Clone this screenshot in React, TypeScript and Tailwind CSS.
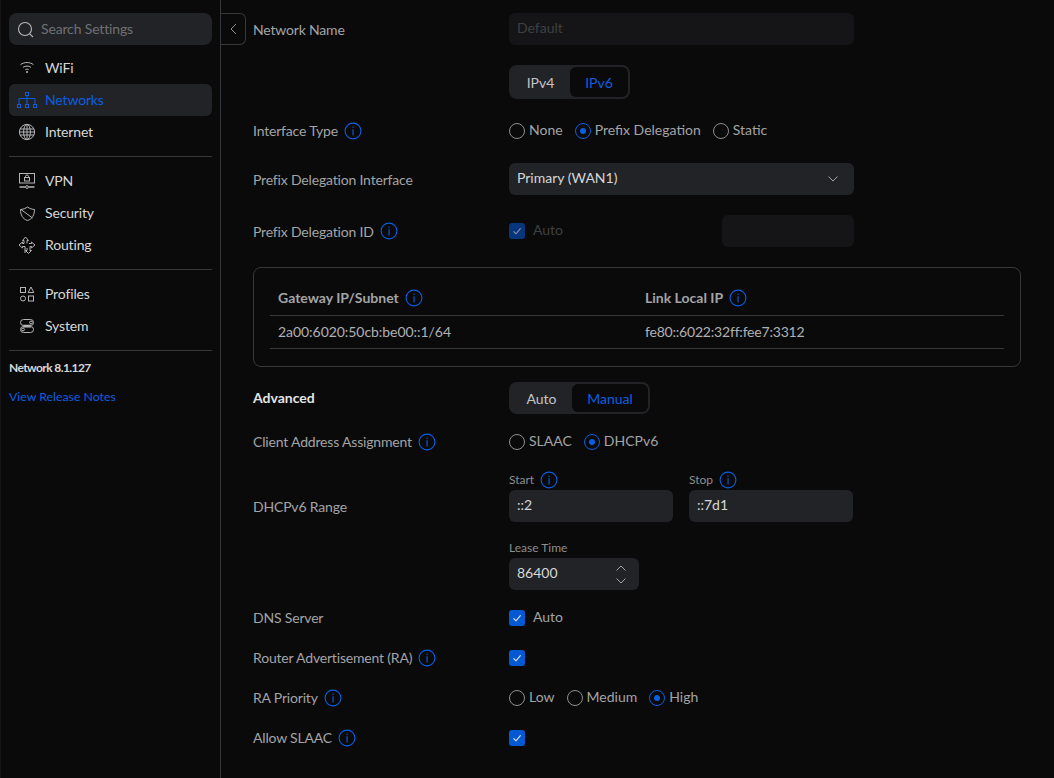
import React from "react";

const BLUE = "text-[#0a5fe0]";

function Info() {
  return (
    <svg width="18" height="18" viewBox="0 0 18 18" fill="none" className="text-[#0a5fe0] shrink-0">
      <circle cx="9" cy="9" r="7.9" stroke="currentColor" strokeWidth="1.1" />
      <rect x="8.5" y="4.6" width="1.1" height="1.3" fill="currentColor" />
      <rect x="8.5" y="7.2" width="1.1" height="6.2" fill="currentColor" />
    </svg>
  );
}

function Radio({ on, label }: { on?: boolean; label: string }) {
  return (
    <div className="flex items-center gap-[4px]">
      <span
        className={`w-4 h-4 rounded-full border flex items-center justify-center ${
          on ? "border-[#0a5fe0]" : "border-[#8d8e90]"
        }`}
      >
        {on && <span className="w-[6px] h-[6px] rounded-full bg-[#0a5fe0]" />}
      </span>
      <span className="text-[14px] text-[#a3a4a6] -mt-[4px]">{label}</span>
    </div>
  );
}

function Check({ dim }: { dim?: boolean }) {
  return (
    <span className={`w-4 h-4 rounded-[3px] flex items-center justify-center ${dim ? "bg-[#07367c]" : "bg-[#0559d4]"}`}>
      <svg width="10" height="10" viewBox="0 0 10 10" fill="none">
        <path d="M1.5 5.4 4 7.8 8.6 2.4" stroke={dim ? "#8b98ad" : "#e8eefa"} strokeWidth="1.1" />
      </svg>
    </span>
  );
}

function Seg({ a, b, h, w, active }: { a: string; b: string; h: string; w: string; active: string }) {
  return (
    <div className={`flex items-center rounded-lg bg-[#222326] pr-[2px] ${h} ${w}`}>
      <div className="flex-1 pl-[2px] flex items-center justify-center text-[14px] text-[#c3c4c6]">{a}</div>
      <div className={`h-[calc(100%-4px)] rounded-md bg-[#0a0a0b] flex items-center justify-center text-[14px] ${active} ${BLUE}`}>
        {b}
      </div>
    </div>
  );
}

function Row({ label, info, h, mt, bold, up, children }: { label: string; info?: boolean; h: string; mt: string; bold?: boolean; up?: boolean; children?: React.ReactNode }) {
  return (
    <div className={`flex items-center ${h} ${mt}`}>
      <div className={`w-[256px] flex items-center gap-[6px] text-[14px] ${bold ? "font-bold text-[#e4e4e5]" : "text-[#a3a4a6] tracking-[-0.18px]"}`}>
        <span className={up ? "-mt-[2px]" : ""}>{label}</span>
        {info && <Info />}
      </div>
      {children}
    </div>
  );
}

const stroke = { fill: "none", stroke: "currentColor", strokeWidth: 1 };

const icons: Record<string, React.ReactNode> = {
  wifi: (
    <g {...stroke}>
      <path d="M3.500 6.700c3.600-2.900 9.400-2.900 13 0" />
      <path d="M6 9.400c2.300-1.800 5.700-1.800 8 0" />
      <path d="M8.300 11.700c1-.7 2.400-.7 3.400 0" />
      <circle cx="10" cy="14" r="0.700" />
    </g>
  ),
  networks: (
    <g {...stroke}>
      <rect x="8.500" y="2.500" width="3" height="3" />
      <path d="M10 5.500v9M2 14.500V8.500h16v6" />
      <rect x="0.500" y="14.500" width="3" height="3" />
      <rect x="8.500" y="14.500" width="3" height="3" />
      <rect x="16.500" y="14.500" width="3" height="3" />
    </g>
  ),
  globe: (
    <g {...stroke}>
      <circle cx="10" cy="10" r="7.600" />
      <ellipse cx="10" cy="10" rx="3.400" ry="7.600" />
      <path d="M10 2.400v15.200M3 7h14M3 13h14M2.400 10h15.200" />
    </g>
  ),
  vpn: (
    <g {...stroke}>
      <rect x="2.500" y="2.500" width="15" height="9.500" />
      <rect x="7.500" y="6.500" width="5" height="3.500" />
      <path d="M8.500 6.500V5.300c0-1.800 3-1.800 3 0v1.200" />
      <path d="M2.500 16h6M11.500 16h6" strokeWidth="1.600" />
      <circle cx="10" cy="16" r="1.400" />
    </g>
  ),
  security: (
    <g {...stroke}>
      <path d="M3.500 6.500C6 6.300 8.500 5.500 10.500 4c2 1.500 4.500 2.300 7 2.500 0 5-2 9.500-7 11-5-1.500-7-6-7-11z" />
      <path d="M4 6.500 15.500 15" />
    </g>
  ),
  routing: (
    <g {...stroke}>
      <path d="M7 8.500V5.500H5.500L8.500 2l3 3.500H10v3" />
      <path d="M7 8.500H5.500V7L2 10l3.500 3v-1.500H8" />
      <path d="M13 11.500h1.500V13l3.500-3-3.500-3v1.500H12" />
      <path d="M10 13v2.500H8.500L11.500 18.500l3-3H13v-4" />
      <path d="M8 11.500V18" />
    </g>
  ),
  profiles: (
    <g {...stroke}>
      <rect x="3.500" y="3.500" width="5" height="5" />
      <path d="M14 3 16.800 8.500H11.200z" />
      <circle cx="6" cy="14.500" r="2.500" />
      <rect x="11.500" y="12" width="5" height="5" />
    </g>
  ),
  system: (
    <g {...stroke}>
      <path d="M6 8.500h8v3.500H6z" fill="currentColor" fillOpacity="0.55" stroke="none" />
      <rect x="3.500" y="3.500" width="13" height="6" rx="3" />
      <rect x="3.500" y="10.500" width="13" height="6" rx="3" />
      <circle cx="14" cy="6.500" r="1.400" />
      <circle cx="6" cy="13.500" r="1.400" />
    </g>
  ),
};

function NavItem({ icon, label, active }: { icon: string; label: string; active?: boolean }) {
  return (
    <div
      className={`h-8 rounded-md flex items-center gap-[8px] pl-[8px] text-[14px] tracking-[-0.15px] ${
        active ? "bg-[#222326] text-[#0a5fe0]" : "text-[#d6d7d8]"
      }`}
    >
      <svg width="20" height="20" viewBox="0 0 20 20" className={`shrink-0 ${active ? "" : "text-[#b4b5b7]"}`}>
        {icons[icon]}
      </svg>
      <span className="-mt-[2px]">{label}</span>
    </div>
  );
}

function Divider() {
  return <div className="h-px bg-[#37383b]" />;
}

function Sidebar() {
  return (
    <aside className="w-[221px] shrink-0 border-l border-l-[#151517] border-r border-r-[#37383b] pt-[13px] pl-[8px] pr-[8px] flex flex-col">
      <div className="h-8 rounded-lg bg-[#222326] flex items-center pl-[8px] gap-[7px] text-[14px] tracking-[-0.15px] text-[#6f7073]">
        <svg width="17" height="17" viewBox="0 0 17 17" fill="none" stroke="#b6b7b9" strokeWidth="1.1" className="shrink-0">
          <circle cx="8" cy="8" r="6.500" />
          <path d="M12.800 12.800 16 16" />
        </svg>
        <span className="-mt-[2px]">Search Settings</span>
      </div>
      <div className="mt-[7px]">
        <NavItem icon="wifi" label="WiFi" />
        <NavItem icon="networks" label="Networks" active />
        <NavItem icon="globe" label="Internet" />
      </div>
      <div className="my-[8px]">
        <Divider />
      </div>
      <div>
        <NavItem icon="vpn" label="VPN" />
        <NavItem icon="security" label="Security" />
        <NavItem icon="routing" label="Routing" />
      </div>
      <div className="my-[8px]">
        <Divider />
      </div>
      <div>
        <NavItem icon="profiles" label="Profiles" />
        <NavItem icon="system" label="System" />
      </div>
      <div className="my-[8px]">
        <Divider />
      </div>
      <div className="text-[12px] font-bold tracking-[-0.6px] text-[#d6d7d8]">Network 8.1.127</div>
      <div className="text-[12.3px] text-[#0a5fe0] mt-[11px]">View Release Notes</div>
    </aside>
  );
}

function Field({ w, value, dim, children }: { w: string; value?: string; dim?: boolean; children?: React.ReactNode }) {
  return (
    <div
      className={`h-8 rounded-md flex items-center justify-between pl-[8px] pr-[16px] text-[14px] ${w} ${
        dim ? "bg-[#151517] text-[#3f4042]" : "bg-[#222326] text-[#d6d7d8]"
      }`}
    >
      <span className="-mt-[4px]">{value}</span>
      {children}
    </div>
  );
}

function Chevron({ up }: { up?: boolean }) {
  return (
    <svg width="10" height="6" viewBox="0 0 10 6" fill="none" stroke="#a3a4a6" strokeWidth="1">
      <path d={up ? "M0.500 5.500 5 1l4.500 4.500" : "M0.500 0.500 5 5l4.500-4.500"} />
    </svg>
  );
}

function InfoTable() {
  return (
    <div className="mt-[20px] h-[100px] w-[768px] rounded-lg border border-[#37383b] px-[16px] pt-[12px]">
      <div className="h-[36px] border-b border-[#37383b] grid grid-cols-[367px_1fr] items-center pl-[8px] text-[14px] font-bold text-[#a3a4a6]">
        <div className="flex items-center gap-[6px]">
          <span>Gateway IP/Subnet</span>
          <Info />
        </div>
        <div className="flex items-center gap-[6px]">
          <span>Link Local IP</span>
          <Info />
        </div>
      </div>
      <div className="h-[33px] border-b border-[#37383b] grid grid-cols-[367px_1fr] items-center pl-[8px] text-[14px] text-[#b0b1b3]">
        <div className="-mt-[2px] tracking-[-0.05px]">2a00:6020:50cb:be00::1/64</div>
        <div className="-mt-[2px] tracking-[-0.2px]">fe80::6022:32ff:fee7:3312</div>
      </div>
    </div>
  );
}

export default function App() {
  return (
    <div className="w-[1054px] h-[778px] overflow-hidden flex bg-[#0a0a0b] font-['Lato',sans-serif]">
      <Sidebar />
      <div className="w-[32px] shrink-0 pt-[13px]">
        <div className="w-[25px] h-8 rounded-r-md border border-l-0 border-[#37383b] flex items-center justify-center">
          <svg width="7" height="12" viewBox="0 0 7 12" fill="none" stroke="#8d8e90" strokeWidth="1">
            <path d="M6 1 1 6l5 5" />
          </svg>
        </div>
      </div>
      <main className="flex-1 pt-[13px]">
        <Row label="Network Name" h="h-8" mt="mt-0">
          <Field w="w-[345px]" value="Default" dim />
        </Row>
        <Row label="" h="h-[34px]" mt="mt-[20px]">
          <Seg a="IPv4" b="IPv6" h="h-[34px]" w="w-[121px]" active="w-[58px]" />
        </Row>
        <Row label="Interface Type" info up h="h-[18px]" mt="mt-[23px]">
          <div className="flex items-center gap-[12px]">
            <Radio label="None" />
            <Radio on label="Prefix Delegation" />
            <Radio label="Static" />
          </div>
        </Row>
        <Row label="Prefix Delegation Interface" h="h-8" mt="mt-[23px]">
          <Field w="w-[345px]" value="Primary (WAN1)">
            <Chevron />
          </Field>
        </Row>
        <Row label="Prefix Delegation ID" info h="h-8" mt="mt-[20px]">
          <div className="w-[345px] flex items-center justify-between">
            <div className="flex items-center gap-[8px] text-[14px] text-[#3f4042]">
              <Check dim />
              <span className="-mt-[4px]">Auto</span>
            </div>
            <Field w="w-[132px]" dim />
          </div>
        </Row>
        <InfoTable />
        <Row label="Advanced" bold up h="h-[32px]" mt="mt-[15px]">
          <Seg a="Auto" b="Manual" h="h-8" w="w-[141px]" active="w-[76px]" />
        </Row>
        <Row label="Client Address Assignment" info up h="h-[18px]" mt="mt-[19px]">
          <div className="flex items-center gap-[12px]">
            <Radio label="SLAAC" />
            <Radio on label="DHCPv6" />
          </div>
        </Row>
        <div className="flex mt-[20px]">
          <div className="w-[256px] pt-[25px] text-[14px] tracking-[-0.18px] text-[#a3a4a6]">DHCPv6 Range</div>
          <div>
            <div className="flex gap-[16px]">
              <div className="w-[164px]">
                <div className="h-[18px] flex items-center gap-[6px] text-[12px] text-[#8d8e90]">
                  <span>Start</span>
                  <Info />
                </div>
                <Field w="w-full mt-[1px]" value="::2" />
              </div>
              <div className="w-[164px]">
                <div className="h-[18px] flex items-center gap-[6px] text-[12px] text-[#8d8e90]">
                  <span>Stop</span>
                  <Info />
                </div>
                <Field w="w-full mt-[1px]" value="::7d1" />
              </div>
            </div>
            <div className="mt-[17px] h-[18px] mb-px text-[12px] text-[#8d8e90] flex items-center">Lease Time</div>
            <div className="h-8 w-[130px] rounded-md bg-[#222326] flex items-center justify-between pl-[8px] pr-[13px] text-[14px] text-[#d6d7d8]">
              <span className="-mt-[4px]">86400</span>
              <div className="flex flex-col gap-[7px]">
                <Chevron up />
                <Chevron />
              </div>
            </div>
          </div>
        </div>
        <Row label="DNS Server" up h="h-[18px]" mt="mt-[19px]">
          <div className="flex items-center gap-[8px] text-[14px] text-[#a3a4a6]">
            <Check />
            <span className="-mt-[3px]">Auto</span>
          </div>
        </Row>
        <Row label="Router Advertisement (RA)" info up h="h-[18px]" mt="mt-[22px]">
          <Check />
        </Row>
        <Row label="RA Priority" info up h="h-[18px]" mt="mt-[22px]">
          <div className="flex items-center gap-[12px]">
            <Radio label="Low" />
            <Radio label="Medium" />
            <Radio on label="High" />
          </div>
        </Row>
        <Row label="Allow SLAAC" info up h="h-[18px]" mt="mt-[22px]">
          <Check />
        </Row>
      </main>
    </div>
  );
}
